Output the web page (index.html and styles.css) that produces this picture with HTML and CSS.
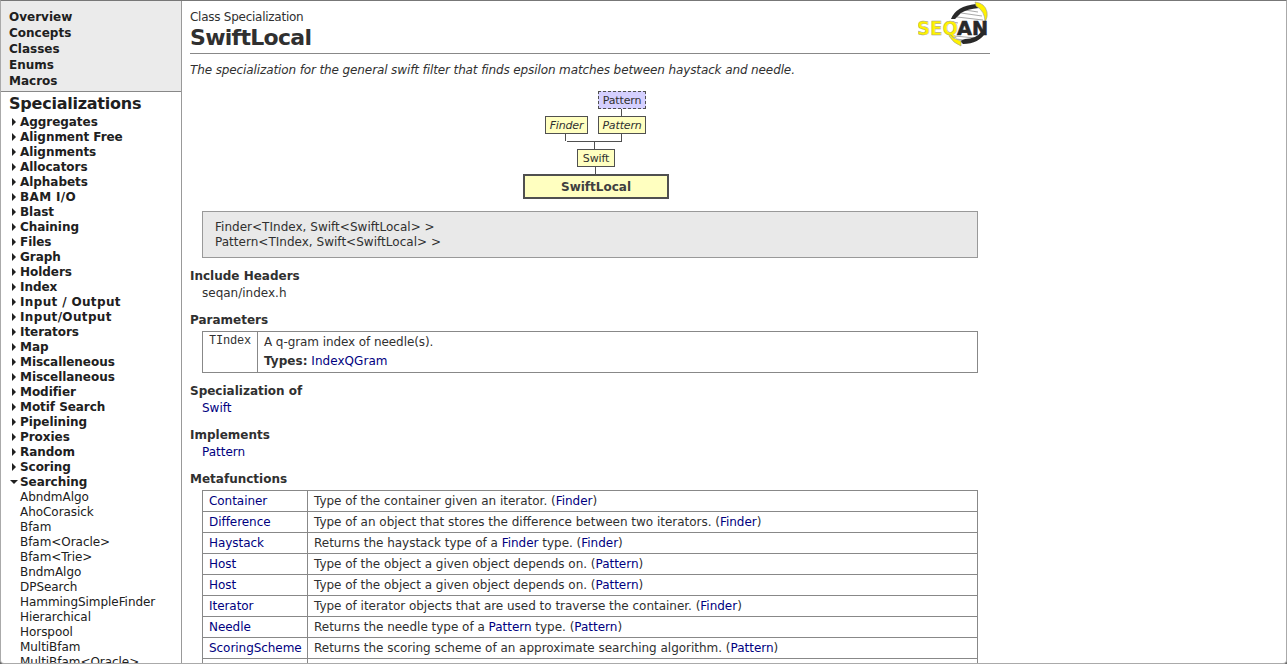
FILE: index.html
```html
<!DOCTYPE html>
<html lang="en">
<head>
<meta charset="utf-8">
<title>SwiftLocal</title>
<link rel="stylesheet" href="styles.css">
</head>
<body>
<div class="window">
<aside class="sidebar">
<nav class="top-nav"><a>Overview</a><a>Concepts</a><a>Classes</a><a>Enums</a><a>Macros</a></nav>
<h2 class="side-title"><span>Specializations</span></h2>
<ul class="groups">
<li>Aggregates</li><li>Alignment Free</li><li>Alignments</li><li>Allocators</li><li>Alphabets</li><li class="loose">BAM I/O</li><li>Blast</li><li>Chaining</li><li>Files</li><li>Graph</li><li>Holders</li><li>Index</li><li class="loose">Input / Output</li><li class="loose">Input/Output</li><li>Iterators</li><li>Map</li><li>Miscalleneous</li><li>Miscellaneous</li><li>Modifier</li><li>Motif Search</li><li>Pipelining</li><li>Proxies</li><li>Random</li><li>Scoring</li><li class="open">Searching</li>
</ul>
<ul class="leaves">
<li>AbndmAlgo</li><li>AhoCorasick</li><li>Bfam</li><li>Bfam&lt;Oracle&gt;</li><li>Bfam&lt;Trie&gt;</li><li>BndmAlgo</li><li>DPSearch</li><li>HammingSimpleFinder</li><li>Hierarchical</li><li>Horspool</li><li>MultiBfam</li><li>MultiBfam&lt;Oracle&gt;</li>
</ul>
</aside>
<main class="content">
<header class="head">
<div><div class="kind">Class Specialization</div><h1 class="title">SwiftLocal</h1></div>
<svg class="logo" width="72" height="46" viewBox="0 0 72 46">
<path d="M31 31C32 19 40 9 57 5C65 9 68 15 67 22C64 34 57 40 44 40C36 39 32 36 31 31Z" fill="#fff"/>
<g stroke="#aaa" stroke-width="1.2"><path d="M47 9L60 11M43 12L64 15M39 16L65 19M35 21L40 22M36 35L58 37M38 38L54 40"/></g>
<path d="M33 18Q38 5 58 3L61 7Q49 8 43 12L37 18Z M42 40L47 38Q58 38 63 31L68 31Q61 43 45 43Z" fill="#292929"/>
<path d="M57 1Q67 2 69 11Q70 16 67 21Q67 10 58 5Z M31 33Q35 38 43 40L43 45Q35 42 31 35Z" fill="#fff200" stroke="#999" stroke-width=".6"/>
<text class="logo-yellow" x="-1" y="34" textLength="41" lengthAdjust="spacingAndGlyphs">SEQ</text>
<text class="logo-dark" x="39" y="34" textLength="31" lengthAdjust="spacingAndGlyphs">AN</text>
</svg>
</header>
<p class="summary">The specialization for the general swift filter that finds epsilon matches between haystack and needle.</p>
<div class="diagram">
<svg class="links" width="800" height="121"><path d="M431.5 24v8M375.5 49v8M431.5 49v8.500M377 57.500h55M404.500 57v8M405.500 83v8" fill="none" stroke="#505050"/></svg>
<div class="node concept">Pattern</div>
<div class="node finder">Finder</div>
<div class="node pattern">Pattern</div>
<div class="node swift">Swift</div>
<div class="node current">SwiftLocal</div>
</div>
<div class="signature"><div>Finder&lt;TIndex, Swift&lt;SwiftLocal&gt; &gt;</div><div>Pattern&lt;TIndex, Swift&lt;SwiftLocal&gt; &gt;</div></div>
<h3 class="section">Include Headers</h3>
<div class="value">seqan/index.h</div>
<h3 class="section">Parameters</h3>
<div class="param"><code class="param-name">TIndex</code><div class="param-info"><div class="param-text">A q-gram index of needle(s).</div><div><b>Types:</b> <a>IndexQGram</a></div></div></div>
<h3 class="section">Specialization of</h3>
<div class="value"><a>Swift</a></div>
<h3 class="section">Implements</h3>
<div class="value"><a>Pattern</a></div>
<h3 class="section">Metafunctions</h3>
<div class="members">
<div class="row"><a>Container</a><p>Type of the container given an iterator. (<a>Finder</a>)</p></div>
<div class="row"><a>Difference</a><p>Type of an object that stores the difference between two iterators. (<a>Finder</a>)</p></div>
<div class="row"><a>Haystack</a><p>Returns the haystack type of a <a>Finder</a> type. (<a>Finder</a>)</p></div>
<div class="row"><a>Host</a><p>Type of the object a given object depends on. (<a>Pattern</a>)</p></div>
<div class="row"><a>Host</a><p>Type of the object a given object depends on. (<a>Pattern</a>)</p></div>
<div class="row"><a>Iterator</a><p>Type of iterator objects that are used to traverse the container. (<a>Finder</a>)</p></div>
<div class="row"><a>Needle</a><p>Returns the needle type of a <a>Pattern</a> type. (<a>Pattern</a>)</p></div>
<div class="row"><a>ScoringScheme</a><p>Returns the scoring scheme of an approximate searching algorithm. (<a>Pattern</a>)</p></div>
<div class="row"><a></a><p></p></div>
</div>
</main>
</div>
</body>
</html>
```
FILE: styles.css
```css
* { box-sizing: border-box; }
body { margin: 0; background: #666; font: 12px/15px Verdana, "DejaVu Sans", sans-serif; color: #303030; }
h1, h2, h3, p, ul { margin: 0; padding: 0; }
ul { list-style: none; }
.window { display: flex; width: 1287px; height: 664px; overflow: hidden; background: #fff; border: 1px solid #aaa; border-top-color: #777; border-radius: 0 0 4px 4px; }
.sidebar { flex: none; width: 181px; height: 662px; overflow: hidden; border-right: 1px solid #999; color: #202020; white-space: nowrap; }
.top-nav { height: 91px; padding: 8px 0 0 8px; background: #ebebeb; border-bottom: 1px solid #888; font-weight: bold; line-height: 16px; }
.top-nav a { display: block; }
.side-title { height: 23px; padding-left: 8px; font-size: 16px; line-height: 24px; letter-spacing: -.23px; }
.groups { padding-left: 19px; font-weight: bold; letter-spacing: -.05px; }
.groups li { position: relative; height: 15px; }
.groups .loose { letter-spacing: .35px; }
.groups li::before { content: ""; position: absolute; left: -8px; top: 3px; border-left: 4px solid #202020; border-top: 4px solid transparent; border-bottom: 4px solid transparent; }
.groups .open::before { left: -10px; top: 5px; border-top: 4px solid #202020; border-left: 4px solid transparent; border-right: 4px solid transparent; border-bottom: 0; }
.leaves { padding-left: 19px; letter-spacing: -.05px; }
.content { width: 800px; margin-left: 8px; white-space: nowrap; }
.content a { color: #000080; }
.head { display: flex; justify-content: space-between; height: 53px; padding-top: 9px; border-bottom: 1px solid #888; }
.kind { letter-spacing: -.26px; }
.title { font-size: 22px; line-height: 25px; letter-spacing: -.7px; }
.logo { margin: -9px 0 0; }
.logo text { font: bold 20px "DejaVu Sans", sans-serif; }
.logo-yellow { fill: #fff200; stroke: #999; stroke-width: .4px; }
.logo-dark { fill: #292929; stroke: #292929; stroke-width: .6px; }
.summary { margin-top: 9px; font-style: italic; letter-spacing: -.112px; }
.diagram { position: relative; height: 133px; }
.links { position: absolute; left: 0; top: 6px; }
.node { position: absolute; height: 18px; border: 1px solid #505050; background: #ffffc0; font-size: 11px; line-height: 18px; text-align: center; letter-spacing: -.15px; }
.concept { left: 408px; top: 13px; width: 48px; border-style: dashed; background: #d5d0ff; }
.finder { left: 355px; top: 38px; width: 43px; font-style: italic; }
.pattern { left: 408px; top: 38px; width: 48px; font-style: italic; }
.swift { left: 387px; top: 71px; width: 38px; }
.current { left: 333px; top: 96px; width: 146px; height: 25px; border-width: 2px; font-size: 12px; font-weight: bold; line-height: 23px; color: #404040; letter-spacing: 0; }
.signature { width: 776px; height: 47px; margin-left: 12px; padding: 8px 12px; border: 1px solid #999; background: #e9e9e9; letter-spacing: .02px; }
.section { height: 17px; margin-top: 10px; font-size: 12px; line-height: 16px; }
.value { height: 17px; padding-left: 12px; line-height: 17px; }
.param { display: grid; grid-template-columns: 55px 1fr; width: 776px; height: 42px; margin: 2px 0 0 12px; border: 1px solid #888; }
.param-name { padding: 2px 0 0 6px; border-right: 1px solid #888; font: 12px/15px "Liberation Mono", monospace; letter-spacing: -.2px; }
.param-info { padding: 3px 6px; }
.param-info div + div { margin-top: 4px; letter-spacing: .04px; }
.param-text { letter-spacing: -.08px; }
.members { width: 776px; margin: 2px 0 0 12px; border: 1px solid #888; border-bottom: 0; }
.row { display: grid; grid-template-columns: 105px 1fr; height: 21px; border-bottom: 1px solid #888; }
.row > a { padding: 1px 0 0 6px; border-right: 1px solid #888; line-height: 19px; letter-spacing: -.05px; }
.row p { padding: 1px 0 0 6px; line-height: 19px; letter-spacing: -.02px; }
```
